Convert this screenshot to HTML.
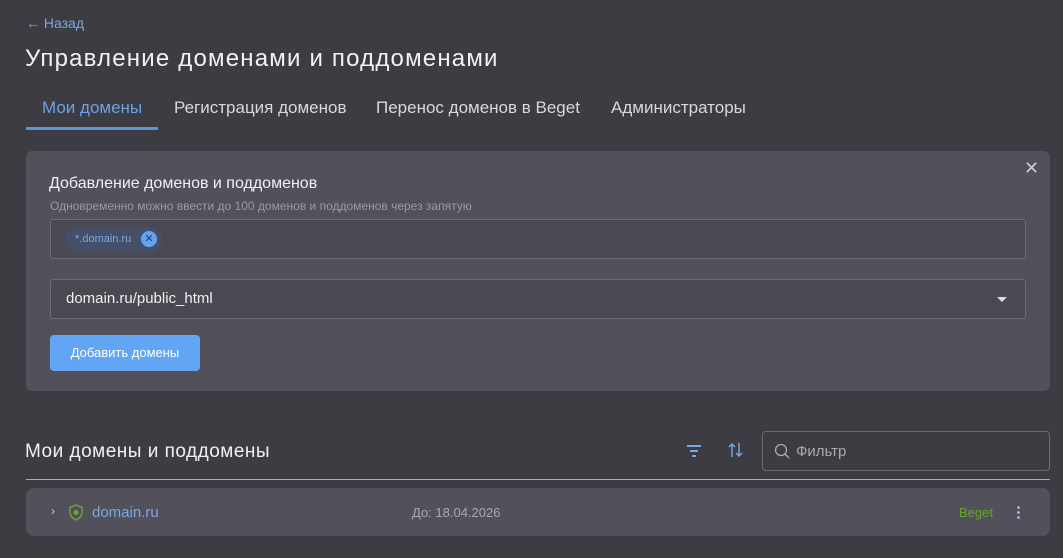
<!DOCTYPE html>
<html><head><meta charset="utf-8"><style>
*{box-sizing:border-box;margin:0;padding:0}
body{width:1063px;height:558px;background:#3d3c43;font-family:"Liberation Sans","DejaVu Sans",sans-serif;position:relative;overflow:hidden;color:#eee}
.a{position:absolute}
</style></head><body>
<div class="a" style="left:26px;top:15px;color:#7aa8e0;font-size:14px">← Назад</div>
<div class="a" style="left:25px;top:45px;font-size:24px;letter-spacing:1.2px;color:#f2f2f2">Управление доменами и поддоменами</div>
<div class="a" style="left:42px;top:98px;font-size:17px;color:#6aa2e6">Мои домены</div>
<div class="a" style="left:26px;top:127px;width:132px;height:3px;background:#5d93d8"></div>
<div class="a" style="left:174px;top:98px;font-size:17px;color:#d8d8dc">Регистрация доменов</div>
<div class="a" style="left:376px;top:98px;font-size:17px;color:#d8d8dc">Перенос доменов в Beget</div>
<div class="a" style="left:611px;top:98px;font-size:17px;color:#d8d8dc">Администраторы</div>
<div class="a" style="left:26px;top:151px;width:1024px;height:240px;background:#52515b;border-radius:6px"></div>
<div class="a" style="left:1024px;top:158px;font-size:18px;color:#ccc">✕</div>
<div class="a" style="left:49px;top:175px;font-size:16px;color:#f0f0f0">Добавление доменов и поддоменов</div>
<div class="a" style="left:50px;top:199px;font-size:12px;color:#9a99a2">Одновременно можно ввести до 100 доменов и поддоменов через запятую</div>
<div class="a" style="left:50px;top:219px;width:976px;height:40px;border:1px solid #6c6b74;border-radius:3px;background:#4a4952"></div>
<div class="a" style="left:66px;top:227px;width:96px;height:25px;border-radius:13px;background:#44506a"></div>
<div class="a" style="left:75px;top:233px;font-size:11px;color:#7aa8e0">*.domain.ru</div>
<div class="a" style="left:141px;top:231px;width:16px;height:16px;border-radius:50%;background:#62a4f4;color:#2b3a55;font-size:11px;text-align:center;line-height:16px;font-weight:bold">✕</div>
<div class="a" style="left:50px;top:279px;width:976px;height:40px;border:1px solid #6c6b74;border-radius:3px;background:#4a4952"></div>
<div class="a" style="left:66px;top:290px;font-size:15px;color:#f0f0f0">domain.ru/public_html</div>
<div class="a" style="left:997px;top:297px;border-left:5px solid transparent;border-right:5px solid transparent;border-top:5px solid #ddd"></div>
<div class="a" style="left:50px;top:335px;width:150px;height:36px;border-radius:4px;background:#62a5f5;color:#fff;font-size:13px;text-align:center;line-height:36px">Добавить домены</div>
<div class="a" style="left:25px;top:441px;font-size:19px;letter-spacing:0.5px;color:#f0f0f0">Мои домены и поддомены</div>
<svg class="a" style="left:686px;top:444px" width="16" height="14"><path d="M1 2H15M4 7H12M6 12H10" stroke="#7aa8e0" stroke-width="2"/></svg>
<svg class="a" style="left:727px;top:442px" width="18" height="16"><path d="M5 15V2M2 5L5 2L8 5M12 1V14M9 11L12 14L15 11" stroke="#7aa8e0" stroke-width="1.4" fill="none"/></svg>
<div class="a" style="left:762px;top:431px;width:288px;height:40px;border:1px solid #6c6b74;border-radius:4px"></div>
<svg class="a" style="left:774px;top:443px" width="16" height="16"><circle cx="7" cy="7" r="5.5" stroke="#aaa" stroke-width="1.3" fill="none"/><path d="M11 11L15 15" stroke="#aaa" stroke-width="1.3"/></svg>
<div class="a" style="left:796px;top:443px;font-size:15px;color:#a9a8b0">Фильтр</div>
<div class="a" style="left:26px;top:479px;width:1024px;height:1px;background:#8fb3e0"></div>
<div class="a" style="left:26px;top:488px;width:1024px;height:48px;background:#52515b;border-radius:8px"></div>
<div class="a" style="left:51px;top:504px;font-size:12px;color:#ccc">›</div>
<svg class="a" style="left:68px;top:504px" width="16" height="17"><path d="M8 1L14 3.5V9C14 12 11 14.5 8 16C5 14.5 2 12 2 9V3.5Z" stroke="#6ba32c" stroke-width="1.5" fill="none"/><circle cx="8" cy="8.5" r="2.5" fill="#6ba32c"/></svg>
<div class="a" style="left:92px;top:504px;font-size:15px;color:#7aa8e0">domain.ru</div>
<div class="a" style="left:412px;top:505px;font-size:13px;color:#a9a8b0">До: 18.04.2026</div>
<div class="a" style="left:959px;top:505px;font-size:13px;color:#6ba32c">Beget</div>
<div class="a" style="left:1017px;top:505px;width:3px;height:14px;background:radial-gradient(circle,#9fb8e0 1.3px,transparent 1.5px) 0 0/3px 5px"></div>
</body></html>
